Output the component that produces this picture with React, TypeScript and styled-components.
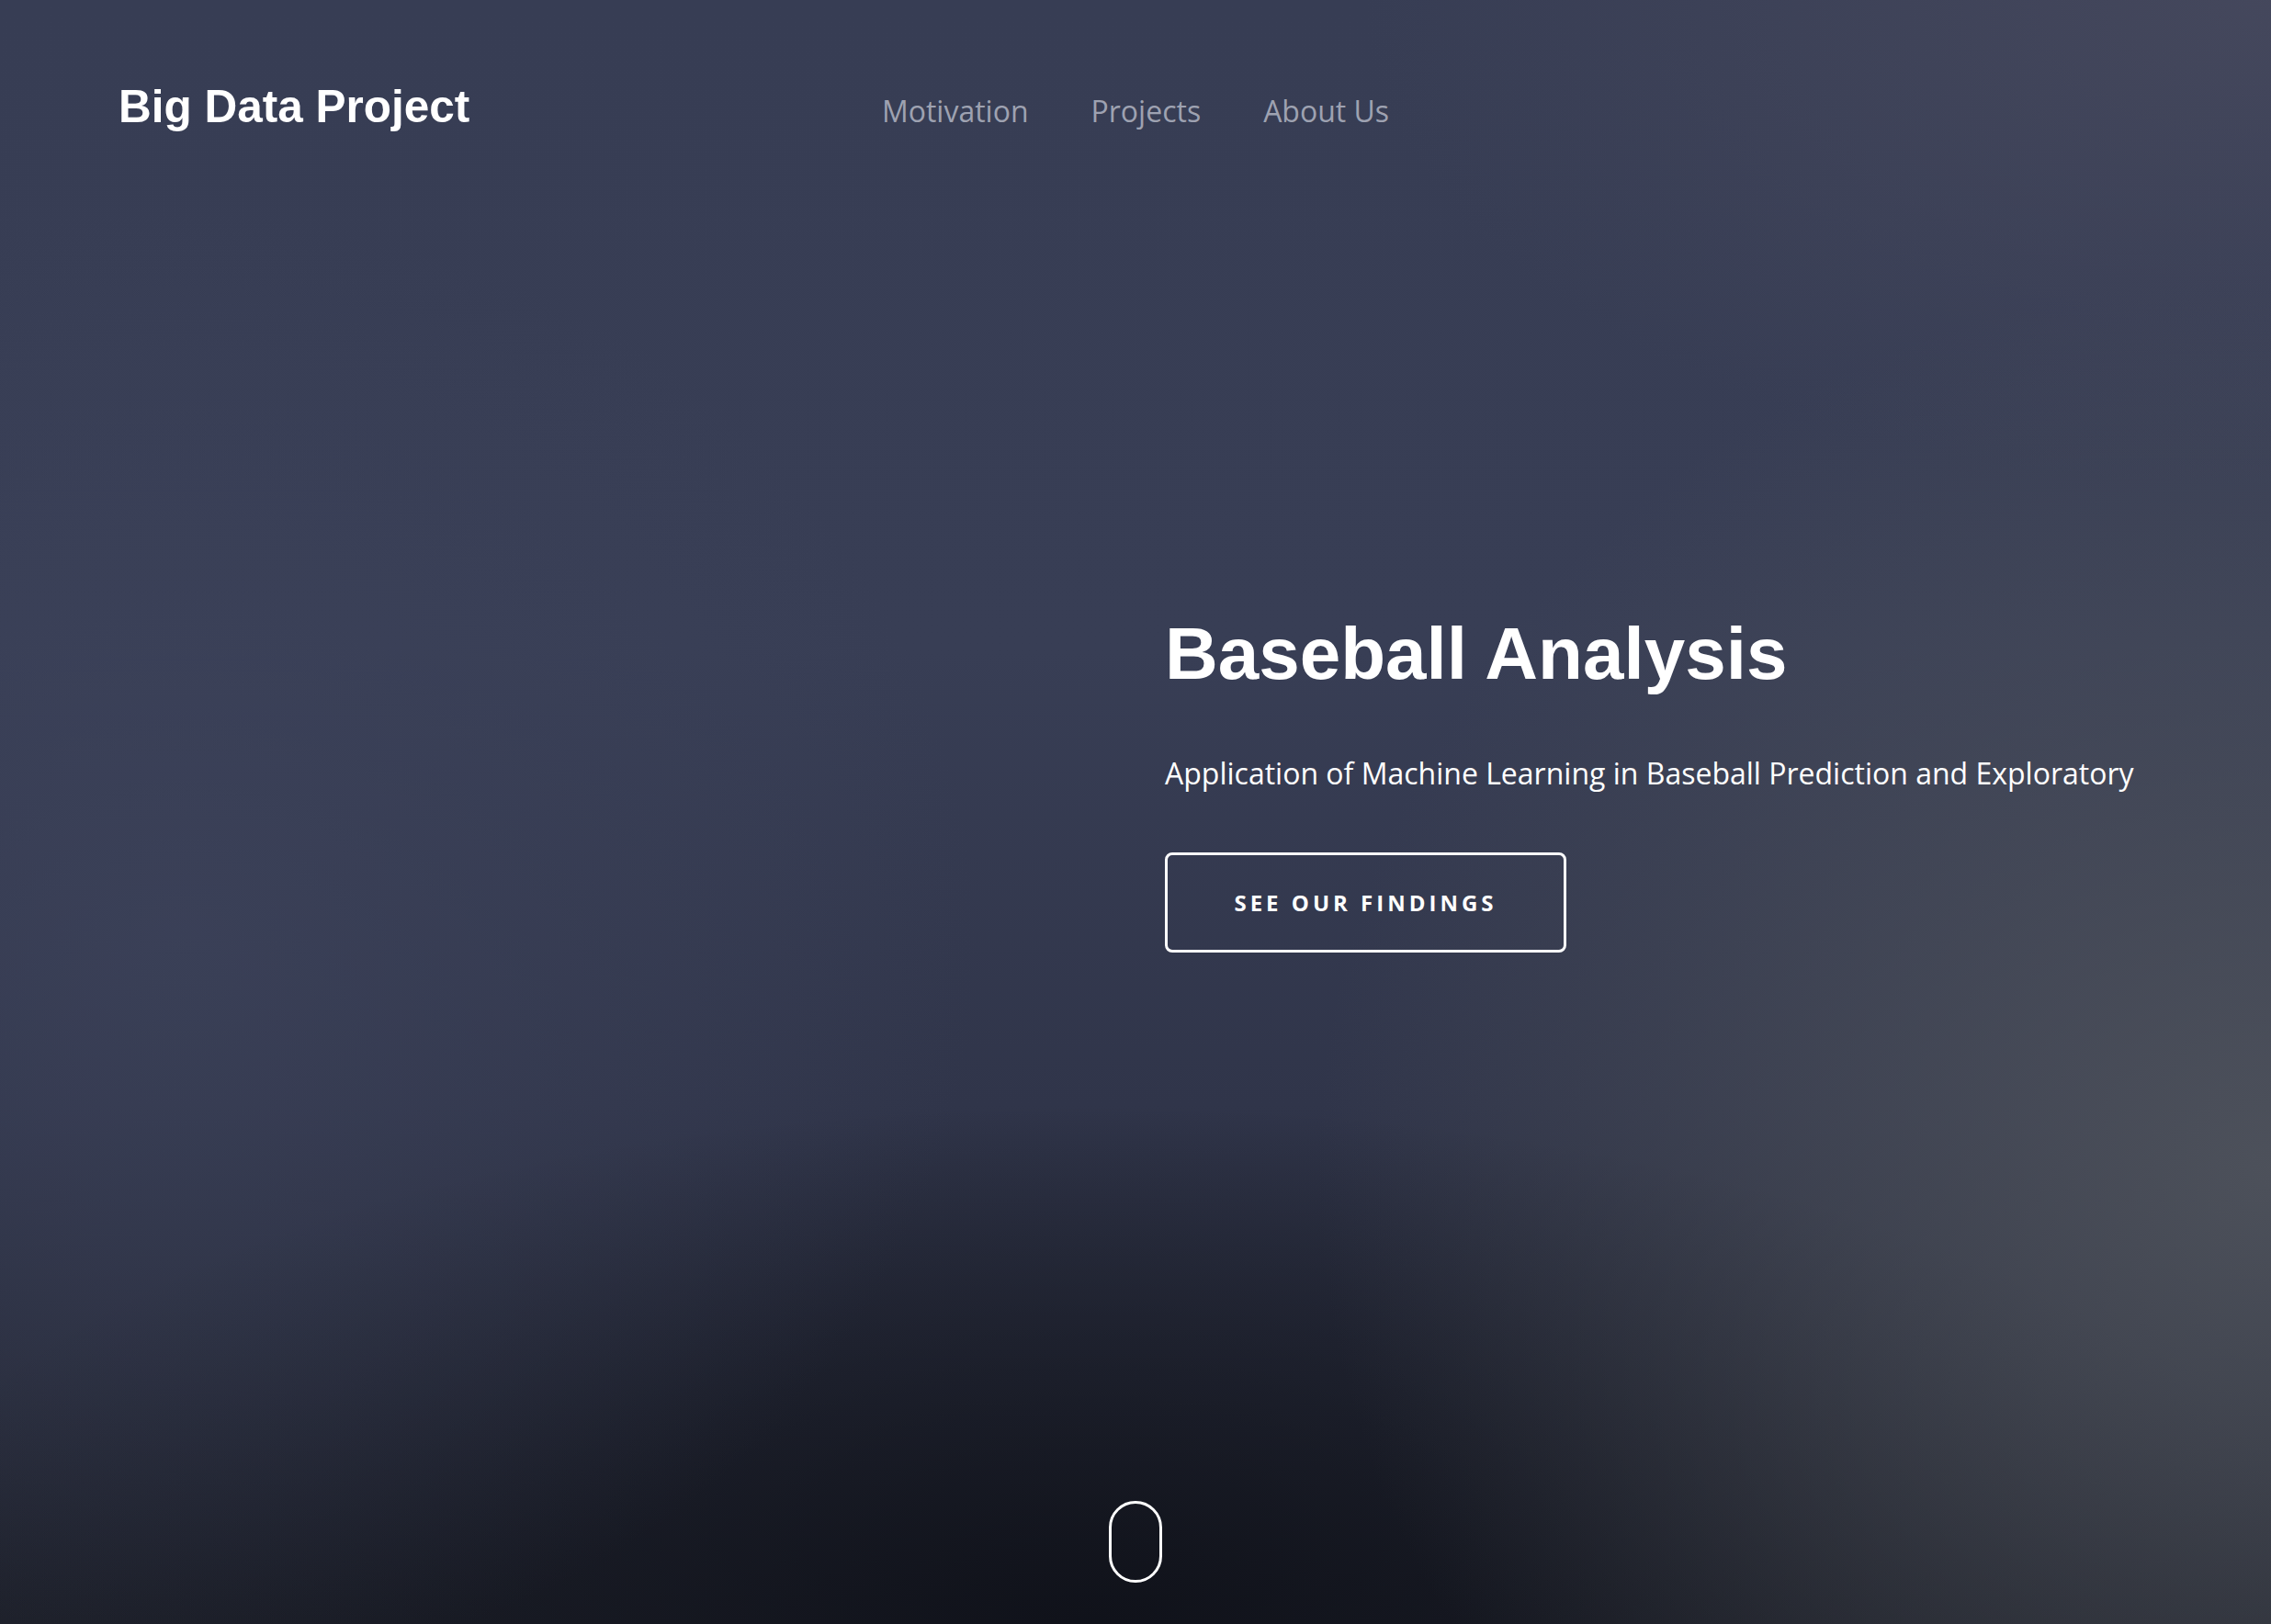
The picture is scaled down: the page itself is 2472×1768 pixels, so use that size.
import React from "react";
import styled, { createGlobalStyle } from "styled-components";

const GlobalStyle = createGlobalStyle`
  html, body {
    margin: 0;
    padding: 0;
    background: #1a1d27;
  }
  * { box-sizing: border-box; }
`;

const Hero = styled.section`
  min-height: 100vh;
  display: flex;
  flex-direction: column;
  color: #ffffff;
  background:
    radial-gradient(ellipse 42% 55% at 100% 72%, rgba(82, 86, 94, 0.85), rgba(82, 86, 94, 0) 100%),
    radial-gradient(ellipse 40% 30% at 100% 0%, rgba(74, 76, 96, 0.7), rgba(74, 76, 96, 0) 100%),
    radial-gradient(ellipse 35% 45% at 8% 58%, rgba(62, 68, 92, 0.65), rgba(62, 68, 92, 0) 100%),
    radial-gradient(ellipse 55% 32% at 48% 100%, rgba(14, 16, 24, 0.9), rgba(14, 16, 24, 0) 100%),
    linear-gradient(180deg, #373d54 0%, #383e55 40%, #30354a 68%, #1f222c 100%);
`;

const Header = styled.header`
  display: grid;
  grid-template-columns: 1fr auto 1fr;
  align-items: baseline;
  padding: 86px 129px 0;
`;

const Logo = styled.a`
  font-family: "Liberation Sans", Arial, sans-serif;
  font-weight: 700;
  font-size: 49.5px;
  line-height: 60px;
  color: #ffffff;
  text-decoration: none;
  white-space: nowrap;
`;

const Nav = styled.nav`
  display: flex;
  gap: 68px;
`;

const NavLink = styled.a`
  font-family: "Open Sans", sans-serif;
  font-size: 32px;
  line-height: 48px;
  color: #9ea2b1;
  text-decoration: none;
  white-space: nowrap;
`;

const Main = styled.main`
  flex: 1;
  display: grid;
  grid-template-columns: 1fr 1fr;
  padding-top: 518px;
`;

const Content = styled.div`
  grid-column: 2;
  padding-left: 32px;
  display: flex;
  flex-direction: column;
  align-items: flex-start;
`;

const Title = styled.h1`
  margin: 0;
  font-family: "Liberation Sans", Arial, sans-serif;
  font-weight: 700;
  font-size: 80px;
  line-height: 96px;
  color: #ffffff;
`;

const Subtitle = styled.p`
  margin: 58px 0 0;
  font-family: "Open Sans", sans-serif;
  font-size: 32px;
  line-height: 48px;
  color: #ffffff;
  white-space: nowrap;
`;

const OutlineButton = styled.a`
  margin-top: 62px;
  width: 437px;
  height: 109px;
  display: flex;
  align-items: center;
  justify-content: center;
  border: 3px solid #ffffff;
  border-radius: 8px;
  font-family: "Open Sans", sans-serif;
  font-weight: 700;
  font-size: 24px;
  line-height: 24px;
  letter-spacing: 4px;
  text-transform: uppercase;
  color: #ffffff;
  text-decoration: none;
`;

const ScrollHint = styled.div`
  display: flex;
  justify-content: center;
  padding-bottom: 45px;
`;

const Mouse = styled.span`
  display: block;
  width: 58px;
  height: 89px;
  border: 3px solid #ffffff;
  border-radius: 29px;
`;

export default function App() {
  return (
    <>
      <GlobalStyle />
      <Hero>
        <Header>
          <Logo href="#">Big Data Project</Logo>
          <Nav>
            <NavLink href="#">Motivation</NavLink>
            <NavLink href="#">Projects</NavLink>
            <NavLink href="#">About Us</NavLink>
          </Nav>
          <span />
        </Header>
        <Main>
          <Content>
            <Title>Baseball Analysis</Title>
            <Subtitle>
              Application of Machine Learning in Baseball Prediction and Exploratory
            </Subtitle>
            <OutlineButton href="#">See our findings</OutlineButton>
          </Content>
        </Main>
        <ScrollHint>
          <Mouse />
        </ScrollHint>
      </Hero>
    </>
  );
}
